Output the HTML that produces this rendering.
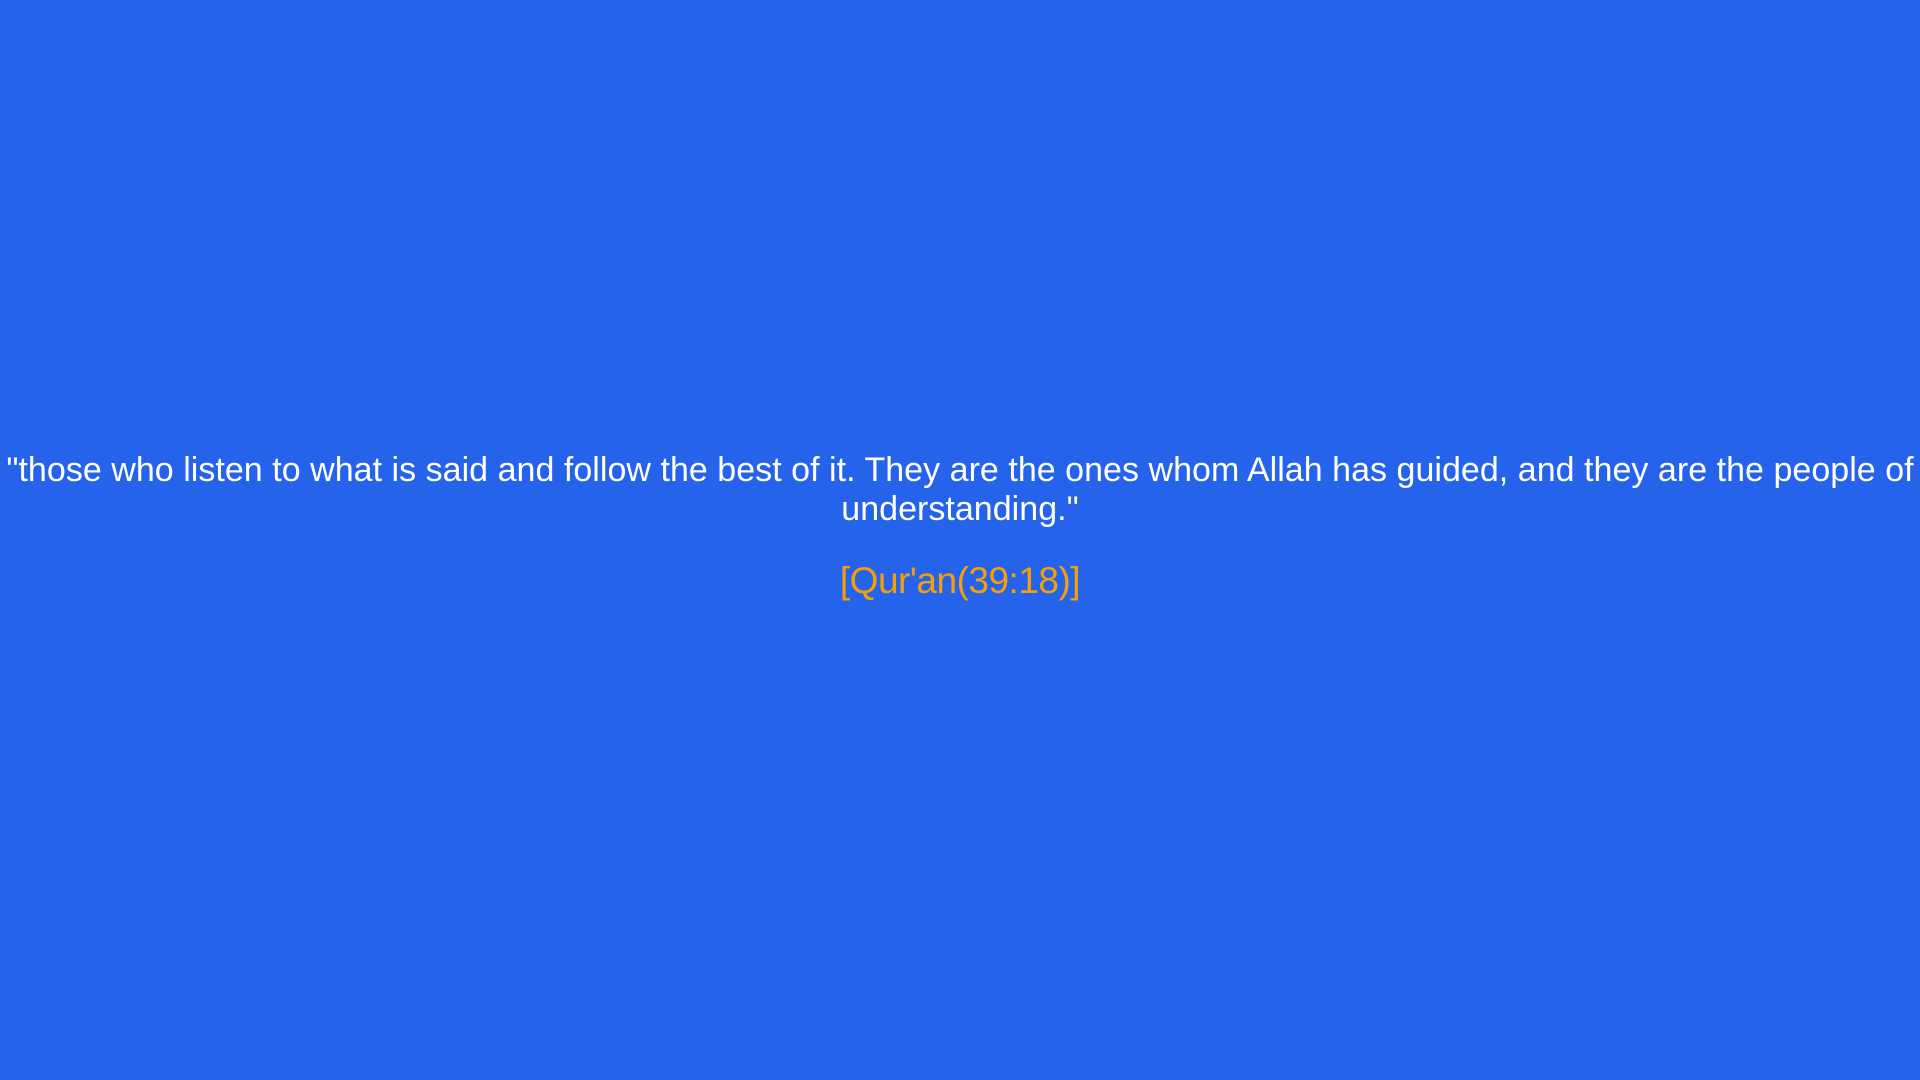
<!DOCTYPE html>
<html><head><meta charset="utf-8"><style>
html,body{margin:0;width:1920px;height:1080px;background:#2563eb;overflow:hidden}
.q{position:absolute;left:0;width:1920px;top:451px;text-align:center;color:#fff;font-family:"Liberation Sans",sans-serif;font-size:34px;line-height:39px;white-space:nowrap;letter-spacing:0.03px}
.c{position:absolute;left:0;width:1920px;top:559px;text-align:center;color:#f59e0b;font-family:"Liberation Sans",sans-serif;font-size:37px;line-height:44px;letter-spacing:-0.5px}
</style></head><body>
<div class="q">"those who listen to what is said and follow the best of it. They are the ones whom Allah has guided, and they are the people of<br>understanding."</div>
<div class="c">[Qur'an(39:18)]</div>
</body></html>
